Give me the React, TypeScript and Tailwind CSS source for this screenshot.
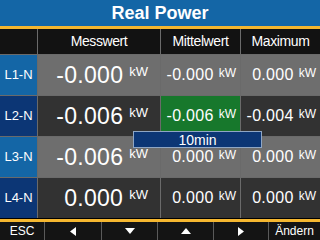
import { ReactNode } from 'react';

type Row = {
  label: string;
  mess: string;
  mittel: string;
  max: string;
  dark: boolean;
};

const rows: Row[] = [
  { label: 'L1-N', mess: '-0.000', mittel: '-0.000', max: '0.000', dark: false },
  { label: 'L2-N', mess: '-0.006', mittel: '-0.006', max: '-0.004', dark: true },
  { label: 'L3-N', mess: '-0.006', mittel: '0.000', max: '0.000', dark: false },
  { label: 'L4-N', mess: '0.000', mittel: '0.000', max: '0.000', dark: true },
];

const BigValue = ({ value }: { value: string }) => (
  <div className="flex items-start justify-end pr-[12px]">
    <span className="text-[23px] leading-none tracking-[0.3px]">{value}</span>
    <span className="ml-[6px] mt-[1px] text-[13px] leading-none">kW</span>
  </div>
);

const SmallValue = ({ value }: { value: string }) => (
  <div className="flex items-start justify-end pr-[4px]">
    <span className="text-[16px] leading-none tracking-[0.3px]">{value}</span>
    <span className="ml-[5px] text-[12px] leading-none">kW</span>
  </div>
);

const Cell = ({ className, children }: { className: string; children: ReactNode }) => (
  <div className={`flex flex-col justify-center text-white ${className}`}>{children}</div>
);

const Triangle = ({ dir }: { dir: 'left' | 'right' | 'up' | 'down' }) => {
  const points = {
    left: '6,0 6,9 0,4.5',
    right: '0,0 0,9 6,4.5',
    up: '0,6 10,6 5,0',
    down: '0,0 10,0 5,6',
  }[dir];
  const size = dir === 'left' || dir === 'right' ? { w: 6, h: 9 } : { w: 10, h: 6 };
  return (
    <svg width={size.w} height={size.h} viewBox={`0 0 ${size.w} ${size.h}`}>
      <polygon points={points} fill="#ffffff" />
    </svg>
  );
};

const footer: { w: string; content: ReactNode }[] = [
  { w: 'w-[45px]', content: <span>ESC</span> },
  { w: 'w-[57px]', content: <Triangle dir="left" /> },
  { w: 'w-[56px]', content: <Triangle dir="down" /> },
  { w: 'w-[56px]', content: <Triangle dir="up" /> },
  { w: 'w-[55px]', content: <Triangle dir="right" /> },
  { w: 'flex-1', content: <span>Ändern</span> },
];

export default function App() {
  return (
    <div
      className="relative w-[320px] h-[240px] overflow-hidden bg-black text-white"
      style={{ fontFamily: '"Liberation Sans", Arial, sans-serif' }}>
      <div className="h-[26px] bg-[#1466a6] flex items-center justify-center text-[18px] font-bold leading-none">
        Real Power
      </div>
      <div className="h-[3px] bg-[#f5b730]" />

      <div className="grid grid-cols-[37px_122px_79px_79px] grid-rows-[25px_40px_40px_40px_40px] gap-px bg-[#6a6a6a]">
        <div className="bg-[#121212]" />
        <div className="bg-[#121212] flex items-center justify-center text-[14px] tracking-[-0.4px]">Messwert</div>
        <div className="bg-[#121212] flex items-center justify-center text-[14px] tracking-[-0.4px]">Mittelwert</div>
        <div className="bg-[#121212] flex items-center justify-center text-[14px] tracking-[-0.4px]">Maximum</div>

        {rows.map((r, i) => (
          <div key={r.label} className="contents">
            <Cell className={`items-center text-[13px] ${r.dark ? 'bg-[#0c3675]' : 'bg-[#1466a6]'}`}>
              {r.label}
            </Cell>
            <Cell className={r.dark ? 'bg-[#323232]' : 'bg-[#6e6e6e]'}>
              <BigValue value={r.mess} />
            </Cell>
            <Cell className={i === 1 ? 'bg-[#17782c]' : r.dark ? 'bg-[#323232]' : 'bg-[#6e6e6e]'}>
              <SmallValue value={r.mittel} />
            </Cell>
            <Cell className={r.dark ? 'bg-[#323232]' : 'bg-[#6e6e6e]'}>
              <SmallValue value={r.max} />
            </Cell>
          </div>
        ))}
      </div>

      <div className="h-[3px] mt-px bg-[#f5b730]" />
      <div className="h-[18px] flex bg-[#141414] text-[12px]">
        {footer.map((f, i) => (
          <div
            key={i}
            className={`${f.w} flex items-center justify-center ${i < footer.length - 1 ? 'border-r border-[#5a5a5a]' : ''}`}>
            {f.content}
          </div>
        ))}
      </div>

      <div className="absolute left-[133px] top-[131px] w-[129px] h-[17px] bg-[#0c3675] border border-[#8fa6c4] flex items-center justify-center text-[14px] leading-none">
        10min
      </div>
    </div>
  );
}
